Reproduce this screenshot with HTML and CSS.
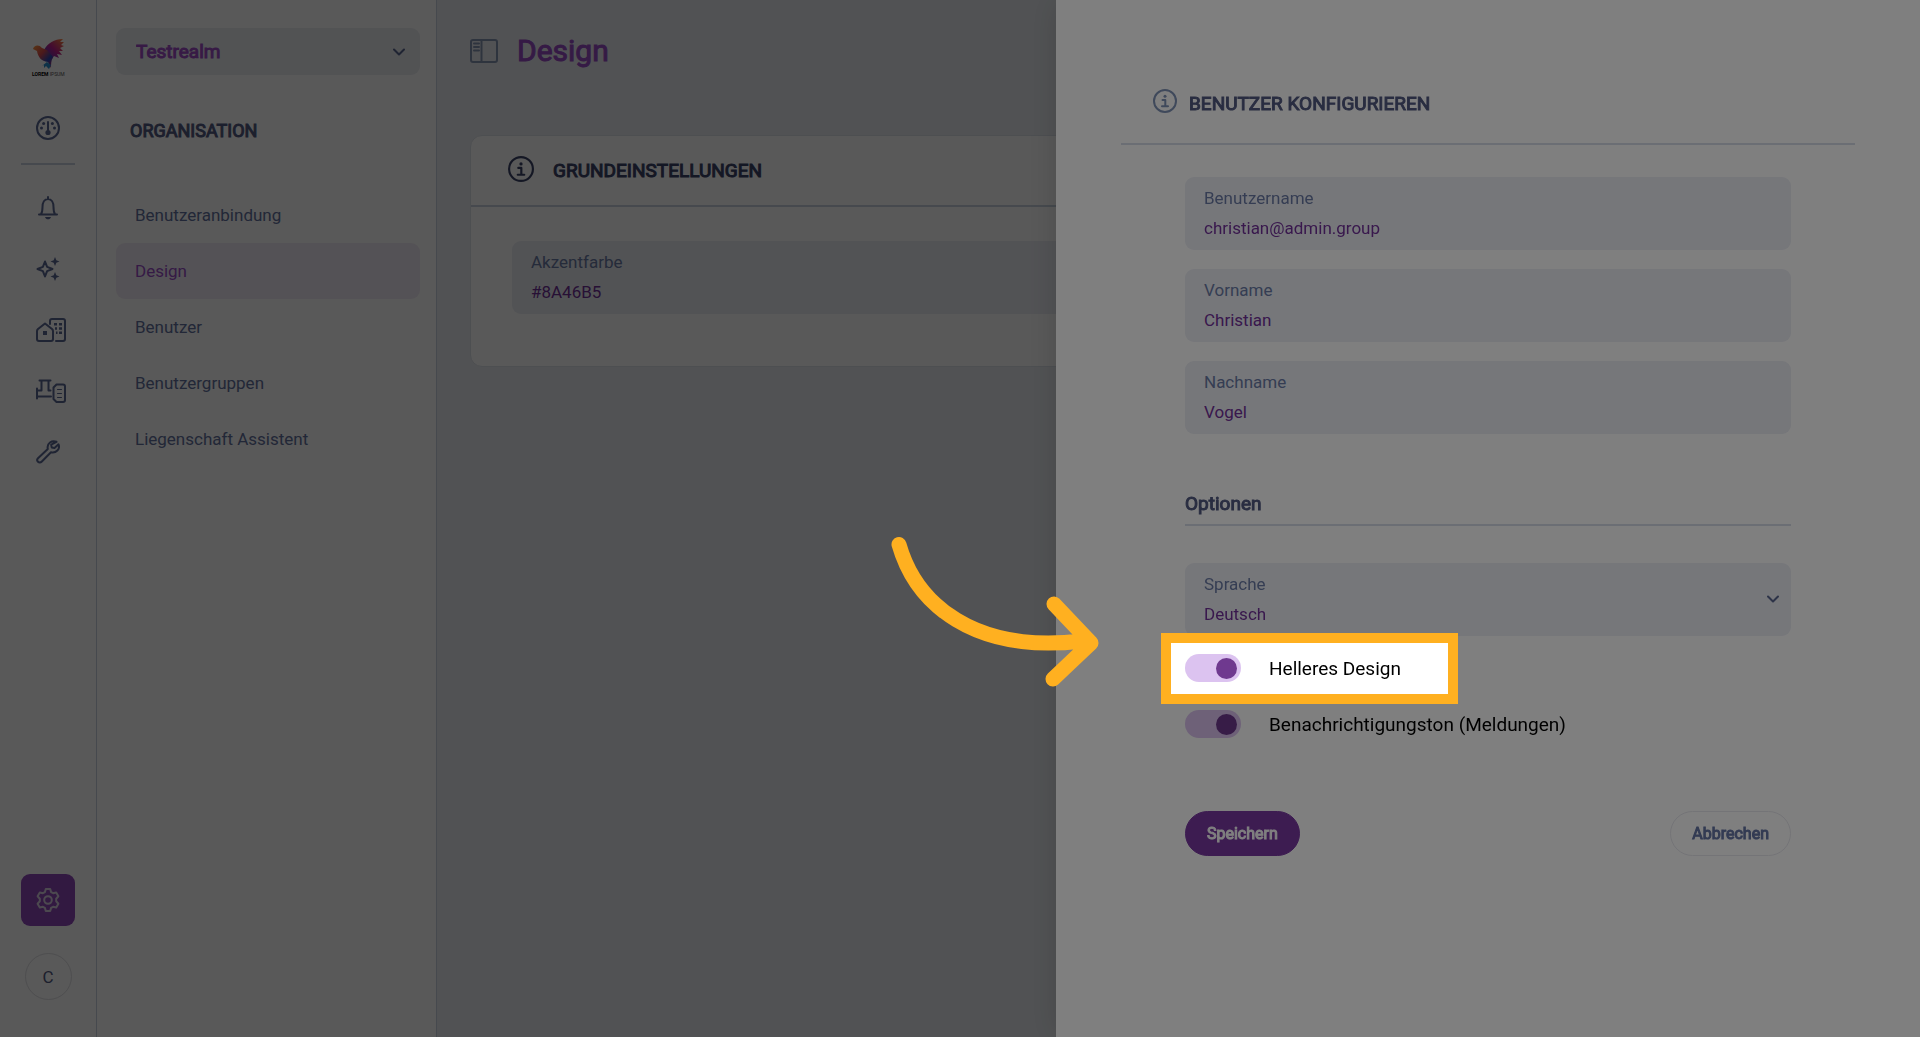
FILE: index.html
```html
<!DOCTYPE html>
<html lang="de">
<head>
    <meta charset="UTF-8">
    <meta name="viewport" content="width=device-width, initial-scale=1.0">
    <title>Design</title>
    <link rel="stylesheet" href="styles.css">
</head>
<body>
    <div class="app">
        <nav class="rail">
            <a class="logo" href="#">
                <svg width="58" height="58" viewBox="0 0 58 58">
                    <defs>
                        <linearGradient id="wing" x1="0" y1="1" x2="1" y2="0">
                            <stop offset="0" stop-color="#3a3fc0"/>
                            <stop offset="0.5" stop-color="#c0208c"/>
                            <stop offset="1" stop-color="#ff8a30"/>
                        </linearGradient>
                        <linearGradient id="bird" x1="0" y1="0" x2="1" y2="1">
                            <stop offset="0" stop-color="#ff9a3a"/>
                            <stop offset="0.4" stop-color="#d84a50"/>
                            <stop offset="0.7" stop-color="#2a48b8"/>
                            <stop offset="1" stop-color="#e02050"/>
                        </linearGradient>
                    </defs>
                    <path d="M25 22C29 15 35 11 44 11L41 14L45 14L42 17L45 18L41 20L44 23L40 23L43 27L38 26L40 30L35 28L33 31L28 30Z" fill="url(#wing)"/>
                    <path d="M14 21C15 17 20 16 23 20L28 22L34 29C32 33 32 36 32 40L29 34C22 33 19 29 18 23Z" fill="url(#bird)"/>
                    <path d="M28 34L32 37L30 41L27 38L25 40L25 37L23 38Z" fill="#2a90d0"/>
                    <text x="13" y="48" class="logo-text"><tspan class="logo-bold">LOREM</tspan> IPSUM</text>
                </svg>
            </a>
            <a class="rail-item" href="#" aria-label="Dashboard">
                <svg width="24" height="24" viewBox="0 0 24 24">
                    <circle cx="12" cy="12" r="11"/>
                    <path d="M12 6v9"/>
                    <g class="solid"><circle cx="12" cy="16.500" r="2.600"/><circle cx="5.500" cy="12" r="1.500"/><circle cx="18.500" cy="12" r="1.500"/><circle cx="7.600" cy="7.600" r="1.500"/><circle cx="16.400" cy="7.600" r="1.500"/></g>
                </svg>
            </a>
            <div class="rail-divider"></div>
            <a class="rail-item" href="#" aria-label="Meldungen">
                <svg width="24" height="24" viewBox="0 0 24 24">
                    <path d="M3 18.500h18M5 18c1.500-2 1.500-4 1.500-7C6.500 6.500 8.500 3 12 3s5.500 3.500 5.500 8c0 3 0 5 1.500 7M12 1v2"/>
                    <path class="solid" d="M9 21h6c-.5 1.500-1.600 2.300-3 2.300S9.500 22.500 9 21z"/>
                </svg>
            </a>
            <a class="rail-item" href="#" aria-label="Assistent">
                <svg width="24" height="24" viewBox="0 0 24 24">
                    <path d="M9 4.500l2.100 5.400 5.400 2.100-5.400 2.100L9 19.500l-2.100-5.400L1.500 12l5.400-2.100z"/>
                    <path class="solid" d="M19 0l1.300 3.200L23.500 4.500l-3.200 1.300L19 9l-1.300-3.200-3.200-1.300 3.200-1.300zM19 15l1.300 3.200 3.200 1.300-3.200 1.300L19 24l-1.300-3.200-3.200-1.300 3.200-1.300z"/>
                </svg>
            </a>
            <a class="rail-item wide" href="#" aria-label="Liegenschaften">
                <svg width="30" height="24" viewBox="0 0 30 24">
                    <path d="M1 13q0-1 1-2L9 5.500l7 5.500q1 1 1 2v8q0 2-2 2H3q-2 0-2-2zM14 6V3q0-2 2-2h11q2 0 2 2v18q0 2-2 2h-7"/>
                    <path class="solid" d="M7 13h4v4H7zM18 5h3v2.500h-3zM23 5h3v2.500h-3zM19 9.200h2v2.500h-2zM23 9.200h3v2.500h-3zM20 13.500h1.500V16H20zM23 13.500h3V16h-3z"/>
                </svg>
            </a>
            <a class="rail-item wide" href="#" aria-label="Anlagen">
                <svg width="30" height="24" viewBox="0 0 30 24">
                    <path d="M1 9.500v10M1 17.500h14M1 11.500h4.500V2M3.500 1.500h11M12.500 2v9.500h2"/>
                    <path d="M20.500 5.500H27q2 0 2 2V21q0 2-2 2h-6.500l-3-3V8.500z"/>
                    <path class="thin" d="M21.500 10.500h4M21.500 14.500h4M21.500 18.500h4"/>
                </svg>
            </a>
            <a class="rail-item" href="#" aria-label="Werkzeuge">
                <svg width="24" height="24" viewBox="0 0 24 24">
                    <path d="M20.500 1.800C16 0 10.500 3 11.800 9L2 18.300c-1 1-1 2.500 0 3.500s2.600 1 3.600 0L15 12.300C20 13.500 24.500 9 22.500 4.300L18.500 8l-2.800-.600-.500-2.700z"/>
                </svg>
            </a>
            <div class="rail-bottom">
                <button class="settings" type="button" aria-label="Einstellungen">
                    <svg width="24" height="24" viewBox="0 0 24 24">
                        <path d="M9.800 1h4.400l.9 3.100 2 1.100 3.100-.7 2.200 3.800L20.200 10.700v2.600l2.200 2.400-2.200 3.800-3.100-.7-2 1.100-.9 3.100H9.800l-.9-3.100-2-1.100-3.100.7-2.200-3.800 2.200-2.400v-2.600L1.600 8.300l2.200-3.800 3.100.7 2-1.100z"/>
                        <circle cx="12" cy="12" r="3.800"/>
                    </svg>
                </button>
                <button class="avatar" type="button">C</button>
            </div>
        </nav>

        <aside class="sidebar">
            <div class="realm">
                <select aria-label="Realm">
                    <option>Testrealm</option>
                </select>
                <svg class="chevron" width="12" height="8" viewBox="0 0 12 8"><path d="M1 1.500l5 5 5-5"/></svg>
            </div>
            <h2>ORGANISATION</h2>
            <ul class="menu">
                <li><a href="#">Benutzeranbindung</a></li>
                <li><a class="active" href="#">Design</a></li>
                <li><a href="#">Benutzer</a></li>
                <li><a href="#">Benutzergruppen</a></li>
                <li><a href="#">Liegenschaft Assistent</a></li>
            </ul>
        </aside>

        <main class="content">
            <header class="page-head">
                <svg class="panel-icon" width="28" height="24" viewBox="0 0 28 24">
                    <rect x="1" y="1" width="26" height="22" rx="2"/>
                    <path d="M11.500 1v22M4 4.500h5M4 8h5M4 11.500h5"/>
                </svg>
                <h1>Design</h1>
            </header>
            <section class="card">
                <div class="card-head">
                    <svg class="info" width="26" height="26" viewBox="0 0 24 24">
                        <circle cx="12" cy="12" r="11"/>
                        <path d="M9.500 11h2.800v6M9 17.300h6"/>
                        <circle class="dot" cx="12" cy="7.300" r="1.500"/>
                    </svg>
                    <h2>GRUNDEINSTELLUNGEN</h2>
                </div>
                <div class="card-body">
                    <div class="field">
                        <label for="accent">Akzentfarbe</label>
                        <input type="text" id="accent" value="#8A46B5">
                    </div>
                </div>
            </section>
        </main>
    </div>

    <div class="backdrop"></div>

    <form class="drawer">
        <header class="drawer-head">
            <svg class="info" width="24" height="24" viewBox="0 0 24 24">
                <circle cx="12" cy="12" r="11"/>
                <path d="M9.500 11h2.800v6M9 17.300h6"/>
                <circle class="dot" cx="12" cy="7.300" r="1.500"/>
            </svg>
            <h2>BENUTZER KONFIGURIEREN</h2>
        </header>
        <div class="drawer-body">
            <div class="fields">
                <div class="field">
                    <label for="username">Benutzername</label>
                    <input type="text" id="username" value="christian@admin.group">
                </div>
                <div class="field">
                    <label for="firstname">Vorname</label>
                    <input type="text" id="firstname" value="Christian">
                </div>
                <div class="field">
                    <label for="lastname">Nachname</label>
                    <input type="text" id="lastname" value="Vogel">
                </div>
            </div>
            <h3>Optionen</h3>
            <div class="field field-select">
                <label for="language">Sprache</label>
                <select id="language">
                    <option>Deutsch</option>
                </select>
                <svg class="chevron" width="12" height="8" viewBox="0 0 12 8"><path d="M1 1.500l5 5 5-5"/></svg>
            </div>
            <div class="switches">
                <div class="switch-row spotlight">
                    <input type="checkbox" id="light" class="switch" checked>
                    <label for="light">Helleres Design</label>
                    <svg class="arrow" width="220" height="160" viewBox="0 0 220 160">
                        <path d="M19 14.500C36 74 94 124 202 111M174 74L211 113L173 149"/>
                    </svg>
                </div>
                <div class="switch-row">
                    <input type="checkbox" id="sound" class="switch" checked>
                    <label for="sound">Benachrichtigungston (Meldungen)</label>
                </div>
            </div>
            <div class="actions">
                <button class="btn primary" type="button">Speichern</button>
                <button class="btn" type="button">Abbrechen</button>
            </div>
        </div>
    </form>
</body>
</html>
```
FILE: styles.css
```css
*, *::before, *::after {
    box-sizing: border-box;
}
body, html {
    margin: 0;
    height: 100%;
    overflow: hidden;
    font-family: Roboto, "Liberation Sans", sans-serif;
    font-size: 17px;
    color: #000;
}
h1, h2, h3, ul {
    margin: 0;
    padding: 0;
}
/* headings are the regular cut, thickened by a stroke */
h1, h2, h3, .realm select, .btn {
    font-weight: 400;
    -webkit-text-stroke: 1px currentColor;
}
h2, h3 {
    font-size: 19px;
    color: #525a82;
}
a {
    text-decoration: none;
}
svg {
    flex: none;
    fill: none;
    stroke: currentColor;
    stroke-width: 2;
    stroke-linecap: round;
    stroke-linejoin: round;
}
input, select, button {
    font: inherit;
    border: none;
    outline: none;
    background: none;
    margin: 0;
    padding: 0;
}
select {
    appearance: none;
}
button {
    cursor: pointer;
}
.app {
    display: flex;
    height: 100%;
    background: #fff;
}

/* icon rail */
.rail {
    flex: none;
    width: 97px;
    padding: 28px 0 37px;
    border-right: 1px solid #c9d3e0;
    display: flex;
    flex-direction: column;
    align-items: center;
}
.logo {
    height: 58px;
    margin-bottom: 11px;
}
.logo svg {
    stroke: none;
}
.logo-text {
    font-size: 5px;
    fill: #555;
}
.logo-bold {
    font-weight: 700;
    fill: #000;
}
.rail-item {
    width: 24px;
    height: 61px;
    display: flex;
    align-items: center;
    color: #5a6794;
}
.rail-item.wide {
    margin-left: 6px;
    width: 30px;
}
.rail-item .solid {
    fill: currentColor;
    stroke: none;
}
.rail-item .thin {
    stroke-width: 1;
}
.rail-divider {
    width: 54px;
    height: 2px;
    margin: 5px 0 12px;
    background: #c9d3e0;
}
.rail-bottom {
    margin-top: auto;
    display: flex;
    flex-direction: column;
    align-items: center;
    gap: 27px;
}
.settings {
    width: 54px;
    height: 52px;
    border-radius: 9px;
    background: #9048bc;
    color: #dcd2e4;
    display: flex;
    align-items: center;
    justify-content: center;
}
.avatar {
    width: 47px;
    height: 47px;
    border: 1px solid #e0e0e4;
    border-radius: 50%;
    color: #525a82;
}

/* sidebar */
.sidebar {
    flex: none;
    width: 340px;
    padding: 28px 16px 0 19px;
    border-right: 1px solid #c9d3e0;
}
.realm {
    height: 47px;
    padding: 0 15px 0 20px;
    border-radius: 9px;
    background: #eceef3;
    display: flex;
    align-items: center;
    gap: 8px;
}
.realm select {
    flex: 1;
    font-size: 19px;
    color: #a04cc8;
}
.chevron {
    color: #5b6790;
}
.sidebar h2 {
    margin: 44px 14px;
    line-height: 24px;
    font-size: 18px;
}
.menu {
    list-style: none;
}
.menu a {
    display: block;
    padding: 0 19px;
    line-height: 56px;
    border-radius: 9px;
    color: #6472a0;
}
.menu a.active {
    background: #f3ecf7;
    color: #9a4cc8;
}

/* main column */
.content {
    flex: 1;
    padding: 31px 33px;
    background: #eaedf2;
}
.page-head {
    display: flex;
    align-items: center;
    gap: 19px;
}
.page-head h1 {
    font-size: 30px;
    line-height: 40px;
    color: #9a4cc8;
}
.panel-icon {
    color: #8695b3;
}
.card {
    margin-top: 64px;
    border: 1px solid #dde2ea;
    border-radius: 12px;
    background: #fff;
}
.card-head {
    height: 71px;
    padding: 0 37px;
    border-bottom: 2px solid #c9d3e0;
    display: flex;
    align-items: center;
    gap: 19px;
}
.card-head .info {
    margin-bottom: 4px;
    color: #3b4368;
}
.card-head h2 {
    color: #3b4368;
}
.info .dot {
    fill: currentColor;
    stroke: none;
}
.card-body {
    padding: 34px 41px 52px;
}

/* form fields */
.field {
    height: 73px;
    padding: 7px 19px 8px;
    border-radius: 9px;
    background: #eceef5;
    display: grid;
    row-gap: 2px;
}
.field label {
    line-height: 28px;
    color: #6b7ba6;
}
.field input, .field select {
    width: 100%;
    height: 28px;
    color: #72309a;
}
.field-select {
    grid-template-columns: 1fr 12px;
    padding-right: 12px;
}
.field-select select {
    grid-row: 2;
}
.field-select .chevron {
    grid-column: 2;
    grid-row: 1 / 3;
    align-self: center;
}

/* drawer */
.backdrop {
    position: fixed;
    inset: 0;
    background: rgba(0,0,0,0.3);
}
.drawer {
    position: fixed;
    top: 0;
    right: 0;
    bottom: 0;
    width: 45%;
    padding: 64px 65px;
    background: #fff;
    box-shadow: 0 0 30px rgba(0,0,0,0.15);
}
.drawer-head {
    height: 81px;
    padding: 0 32px;
    border-bottom: 2px solid #d6dce8;
    display: flex;
    align-items: center;
    gap: 12px;
}
.drawer-head .info {
    margin-bottom: 6px;
    color: #7f92b6;
}
.drawer-body {
    padding: 32px 64px 0;
}
.fields {
    display: grid;
    gap: 19px;
}
.drawer h3 {
    margin: 50px 0 37px;
    line-height: 40px;
    border-bottom: 2px solid #d6dce8;
}
.switches {
    margin: 18px 0 73px;
    display: grid;
    gap: 28px;
}
.switch-row {
    height: 28px;
    display: flex;
    align-items: center;
    gap: 28px;
    font-size: 19px;
}
.switch {
    appearance: none;
    width: 56px;
    height: 28px;
    padding: 4px;
    border-radius: 14px;
    background: #dcc3f0;
    display: flex;
    justify-content: flex-end;
    align-items: center;
}
.switch::before {
    content: "";
    width: 21px;
    height: 21px;
    border-radius: 50%;
    background: #6f398f;
}
.switch:not(:checked) {
    justify-content: flex-start;
}
.spotlight {
    position: relative;
    z-index: 1;
}
/* everything outside the frame is dimmed */
.spotlight::after {
    content: "";
    position: absolute;
    top: -21px;
    left: -24px;
    width: 297px;
    height: 71px;
    border: 10px solid #ffb020;
    box-shadow: 0 0 0 2000px rgba(0,0,0,0.5);
    pointer-events: none;
}
.arrow {
    position: absolute;
    top: -124px;
    left: -305px;
    z-index: 1;
    color: #ffb020;
    stroke-width: 15;
    pointer-events: none;
}
.actions {
    display: flex;
    justify-content: space-between;
}
.btn {
    height: 45px;
    padding: 0 21px;
    border: 1px solid #e8e8ee;
    border-radius: 23px;
    font-size: 16px;
    color: #6676a6;
}
.btn.primary {
    border-color: #7a38a3;
    background: #7a38a3;
    color: #fff;
}
```
